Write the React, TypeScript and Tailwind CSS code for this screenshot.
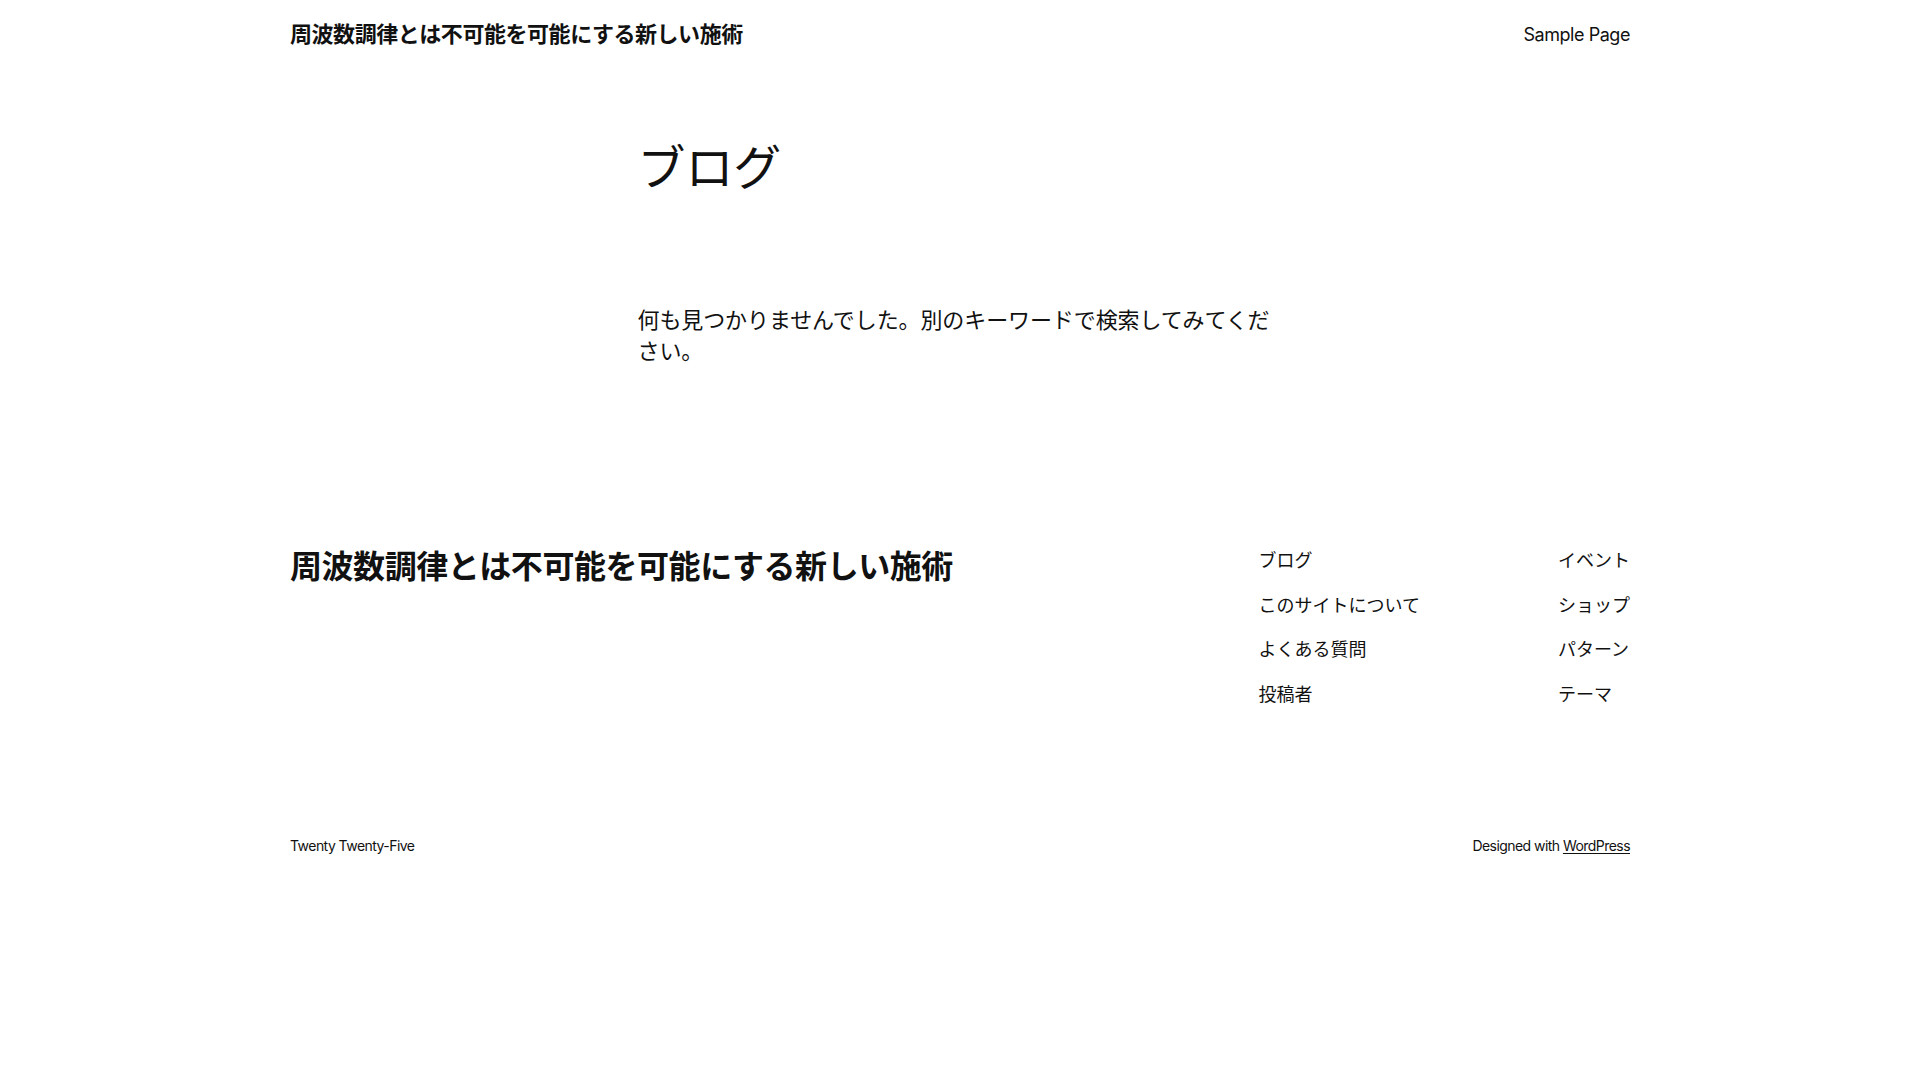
const FOOTER_NAV_LEFT = ["ブログ", "このサイトについて", "よくある質問", "投稿者"];
const FOOTER_NAV_RIGHT = ["イベント", "ショップ", "パターン", "テーマ"];

const SITE_TITLE = "周波数調律とは不可能を可能にする新しい施術";

export default function App() {
  return (
    <div
      className="min-h-screen bg-white text-[#111111]"
      style={{ fontFamily: 'Inter, "Noto Sans CJK JP", sans-serif' }}
    >
      <div className="mx-auto w-[1340px]">
        {/* header */}
        <header className="flex h-[69px] items-center justify-between">
          <a href="#" className="text-[22px] font-bold leading-[31px] tracking-[-0.45px]">
            {SITE_TITLE}
          </a>
          <nav>
            <a href="#" className="text-[18px] leading-[25px] tracking-[-0.45px]">
              Sample Page
            </a>
          </nav>
        </header>

        {/* main */}
        <main className="mx-auto w-[645px] pt-[70px]">
          <h1 className="text-[48px] font-normal leading-[58px] tracking-[-0.1px]">ブログ</h1>
          <p className="mt-[108px] text-[22px] leading-[31px] tracking-[-0.1px]">
            何も見つかりませんでした。別のキーワードで検索してみてください。
          </p>
        </main>

        {/* footer */}
        <footer className="pt-[181px]">
          <div className="flex items-start justify-between">
            <a href="#" className="text-[32px] font-bold leading-[38px] tracking-[-0.45px]">
              {SITE_TITLE}
            </a>
            <div className="flex gap-[138px]">
              <ul className="flex flex-col gap-[19.5px]">
                {FOOTER_NAV_LEFT.map((item) => (
                  <li key={item}>
                    <a href="#" className="text-[18px] leading-[25px]">
                      {item}
                    </a>
                  </li>
                ))}
              </ul>
              <ul className="flex flex-col gap-[19.5px]">
                {FOOTER_NAV_RIGHT.map((item) => (
                  <li key={item}>
                    <a href="#" className="text-[18px] leading-[25px]">
                      {item}
                    </a>
                  </li>
                ))}
              </ul>
            </div>
          </div>

          <div className="mt-[129px] flex items-center justify-between text-[14px] leading-[20px] tracking-[-0.55px]">
            <p>Twenty Twenty-Five</p>
            <p>
              Designed with{" "}
              <a href="#" className="underline underline-offset-2">
                WordPress
              </a>
            </p>
          </div>
        </footer>
      </div>
    </div>
  );
}
